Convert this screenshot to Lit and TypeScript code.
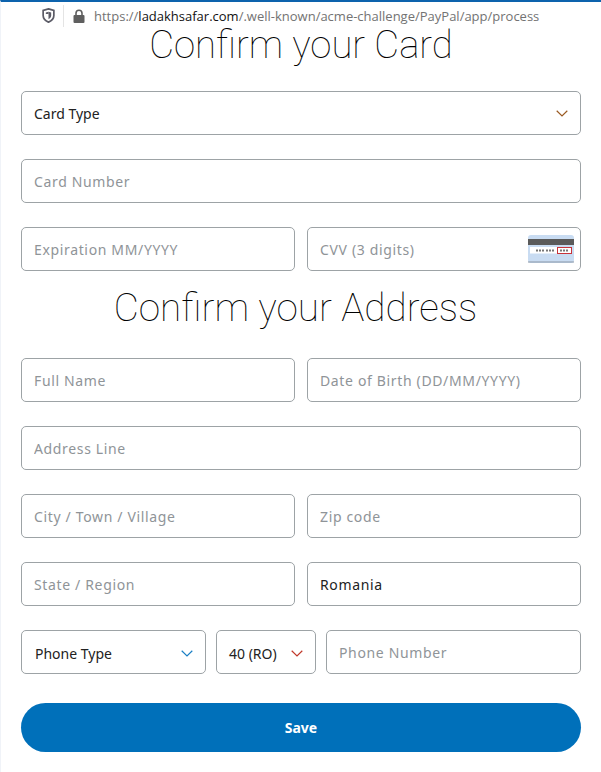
import { LitElement, html, css } from "lit";
import { customElement } from "lit/decorators.js";

const chevron = (color: string) => html`<svg class="chev" width="12" height="7" viewBox="0 0 12 7" fill="none"><path d="M.7 .8 L6 6 L11.300 .8" stroke=${color} stroke-width="1.200"/></svg>`;

@customElement("app-root")
export class AppRoot extends LitElement {
  static styles = css`
    :host { display: block; width: 601px; height: 772px; box-sizing: border-box; background: #fff; border-top: 2px solid #0d63ad; border-left: 1px solid #f0f3f8; font-family: "Noto Sans", sans-serif; overflow: hidden; }
    .bar { display: flex; align-items: center; height: 27px; padding-left: 41px; }
    .shield { margin-right: 8px; }
    .sep { width: 1px; height: 22px; background: #e4e4e4; margin-right: 9px; }
    .lock { margin-right: 9px; }
    .url { font: 13px "Open Sans", sans-serif; color: #737373; white-space: nowrap; }
    .url b { font-weight: 400; color: #111; }
    h1 { margin: 0; font: 100 38.300px/32px "Roboto", sans-serif; color: #000; text-align: center; }
    .heading2 { margin: -7px 0 7px; padding-right: 11px; font-size: 38.700px; line-height: 39px; }
    .form { display: flex; flex-direction: column; gap: 24px; padding: 0 20px; margin-top: 30px; }
    .row { display: flex; gap: 12px; }
    .phone { gap: 10px; }
    .field { height: 44px; box-sizing: border-box; border: 1px solid #9da3a6; border-radius: 5px; display: flex; align-items: center; padding: 1px 12px 0; background: #fff; font-size: 14px; color: #222; }
    .row .field { flex: 1 1 0; min-width: 0; }
    .field input { flex: 1; min-width: 0; border: 0; outline: 0; padding: 0; background: transparent; font: 14px "Noto Sans", sans-serif; letter-spacing: 0.65px; color: #222; }
    .field input::placeholder { color: #8f9498; opacity: 1; }
    .select { justify-content: space-between; }
    .chev { flex: none; }
    .row .ptype { flex: 0 0 185px; padding: 2px 12px 0 13px; }
    .row .code { flex: 0 0 100px; padding: 2px 12px 0; }
    .row .pnum { flex: 1; }
    .cvv-card { flex: none; margin-right: -6px; margin-top: -1px; }
    button { margin-top: 5px; height: 49px; border: 0; border-radius: 25px; background: #0070ba; color: #fff; font: 700 14px "Noto Sans", sans-serif; }
  `;

  render() {
    return html`
      <div class="bar">
        <svg class="shield" width="13" height="15" viewBox="0 0 12 14"><path d="M6 .8 11 2.3V7c0 3-2.2 5-5 6.2C3.200 12 1 10 1 7V2.300Z" fill="none" stroke="#5b5b66" stroke-width="1.600"/><path d="M6 3.500 8.500 4.300V7C8.500 8.600 7.300 9.800 6 10.500Z" fill="#5b5b66"/><path d="M3.500 4.300 6 3.500V5.500H3.500Z" fill="#5b5b66"/></svg>
        <div class="sep"></div>
        <svg class="lock" width="12" height="14" viewBox="0 0 12 14"><path d="M3 6V4.200a3 3 0 0 1 6 0V6" fill="none" stroke="#5f5f5f" stroke-width="1.600"/><rect x="0.500" y="6" width="11" height="8" rx="1" fill="#5f5f5f"/></svg>
        <span class="url">https://<b>ladakhsafar.com</b>/.well-known/acme-challenge/PayPal/app/process</span>
      </div>
      <h1>Confirm your Card</h1>
      <div class="form">
        <div class="field select"><span>Card Type</span>${chevron("#9a5a22")}</div>
        <div class="field"><input placeholder="Card Number" /></div>
        <div class="row">
          <div class="field"><input placeholder="Expiration MM/YYYY" /></div>
          <div class="field"><input placeholder="CVV (3 digits)" />
            <svg class="cvv-card" width="46" height="28" viewBox="0 0 46 28">
              <rect width="46" height="28" rx="3" fill="#c9dcf2"/>
              <path d="M0 27h46" stroke="#8b97a5"/>
              <rect y="4" width="46" height="6" fill="#5a5a5a"/>
              <rect x="2" y="12" width="28" height="6.500" fill="#fff"/>
              <rect x="29.500" y="12.500" width="14" height="6" fill="#fff" stroke="#c8333a"/>
              <path d="M8 15.500h8M18 15.500h9M32 15.500h9" stroke="#777" stroke-width="2" stroke-dasharray="2 1"/>
            </svg>
          </div>
        </div>
        <h1 class="heading2">Confirm your Address</h1>
        <div class="row">
          <div class="field"><input placeholder="Full Name" /></div>
          <div class="field"><input placeholder="Date of Birth (DD/MM/YYYY)" /></div>
        </div>
        <div class="field"><input placeholder="Address Line" /></div>
        <div class="row">
          <div class="field"><input placeholder="City / Town / Village" /></div>
          <div class="field"><input placeholder="Zip code" /></div>
        </div>
        <div class="row">
          <div class="field"><input placeholder="State / Region" /></div>
          <div class="field"><input value="Romania" /></div>
        </div>
        <div class="row phone">
          <div class="field select ptype"><span>Phone Type</span>${chevron("#1a7fc4")}</div>
          <div class="field select code"><span>40 (RO)</span>${chevron("#c0392b")}</div>
          <div class="field pnum"><input placeholder="Phone Number" /></div>
        </div>
        <button>Save</button>
      </div>
    `;
  }
}
